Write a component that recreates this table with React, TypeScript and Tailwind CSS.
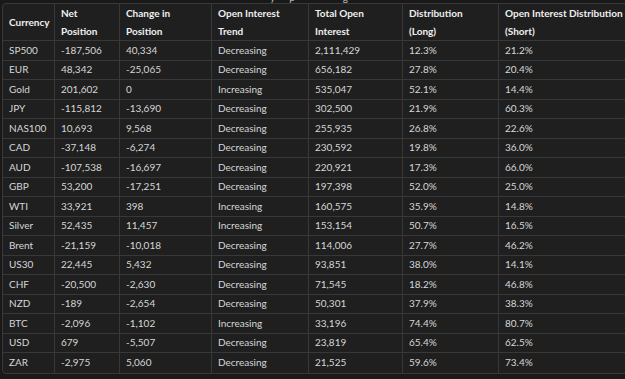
import React from "react";

const rows: string[][] = [
  ["SP500", "-187,506", "40,334", "Decreasing", "2,111,429", "12.3%", "21.2%"],
  ["EUR", "48,342", "-25,065", "Decreasing", "656,182", "27.8%", "20.4%"],
  ["Gold", "201,602", "0", "Increasing", "535,047", "52.1%", "14.4%"],
  ["JPY", "-115,812", "-13,690", "Decreasing", "302,500", "21.9%", "60.3%"],
  ["NAS100", "10,693", "9,568", "Decreasing", "255,935", "26.8%", "22.6%"],
  ["CAD", "-37,148", "-6,274", "Decreasing", "230,592", "19.8%", "36.0%"],
  ["AUD", "-107,538", "-16,697", "Decreasing", "220,921", "17.3%", "66.0%"],
  ["GBP", "53,200", "-17,251", "Decreasing", "197,398", "52.0%", "25.0%"],
  ["WTI", "33,921", "398", "Increasing", "160,575", "35.9%", "14.8%"],
  ["Silver", "52,435", "11,457", "Increasing", "153,154", "50.7%", "16.5%"],
  ["Brent", "-21,159", "-10,018", "Decreasing", "114,006", "27.7%", "46.2%"],
  ["US30", "22,445", "5,432", "Decreasing", "93,851", "38.0%", "14.1%"],
  ["CHF", "-20,500", "-2,630", "Decreasing", "71,545", "18.2%", "46.8%"],
  ["NZD", "-189", "-2,654", "Decreasing", "50,301", "37.9%", "38.3%"],
  ["BTC", "-2,096", "-1,102", "Increasing", "33,196", "74.4%", "80.7%"],
  ["USD", "679", "-5,507", "Decreasing", "23,819", "65.4%", "62.5%"],
  ["ZAR", "-2,975", "5,060", "Decreasing", "21,525", "59.6%", "73.4%"],
];

const headers: string[][] = [
  ["Currency"],
  ["Net", "Position"],
  ["Change in", "Position"],
  ["Open Interest", "Trend"],
  ["Total Open", "Interest"],
  ["Distribution", "(Long)"],
  ["Open Interest Distribution", "(Short)"],
];

export default function App() {
  return (
    <div
      className="w-[625px] h-[379px] overflow-hidden bg-[#191919]"
      style={{ fontFamily: "Lato, 'Open Sans', sans-serif" }}
    >
      <div className="h-[3px] overflow-hidden text-[10px] leading-[12px] text-[#bcbcbc] whitespace-nowrap">
        <div className="-mt-[9px]">
          <span className="ml-[270px]">y</span>
          <span className="ml-[14px]">p</span>
          <span className="ml-[48px]">g</span>
        </div>
      </div>
      <div className="ml-[2px] w-[660px] border border-[#383838] rounded-[4px] bg-[#1f1f1f] overflow-hidden">
        <div className="grid grid-cols-[52px_65px_92px_97px_94px_96px_160px]">
          {headers.map((h, i) => (
            <div
              key={"h" + i}
              className="h-[37px] px-[6px] flex flex-col justify-center border-r border-b border-[#383838] text-[10px] leading-[18px] font-bold text-[#efefef] whitespace-nowrap"
            >
              {h.map((line, j) => (
                <span key={j}>{line}</span>
              ))}
            </div>
          ))}
          {rows.map((r, ri) =>
            r.map((c, ci) => (
              <div
                key={ri + "-" + ci}
                className={
                  "h-[19.5px] px-[6px] flex items-center border-r border-[#383838] text-[10px] text-[#d6d6d6] whitespace-nowrap " +
                  (ri < rows.length - 1 ? "border-b" : "")
                }
              >
                {c}
              </div>
            ))
          )}
        </div>
      </div>
    </div>
  );
}
